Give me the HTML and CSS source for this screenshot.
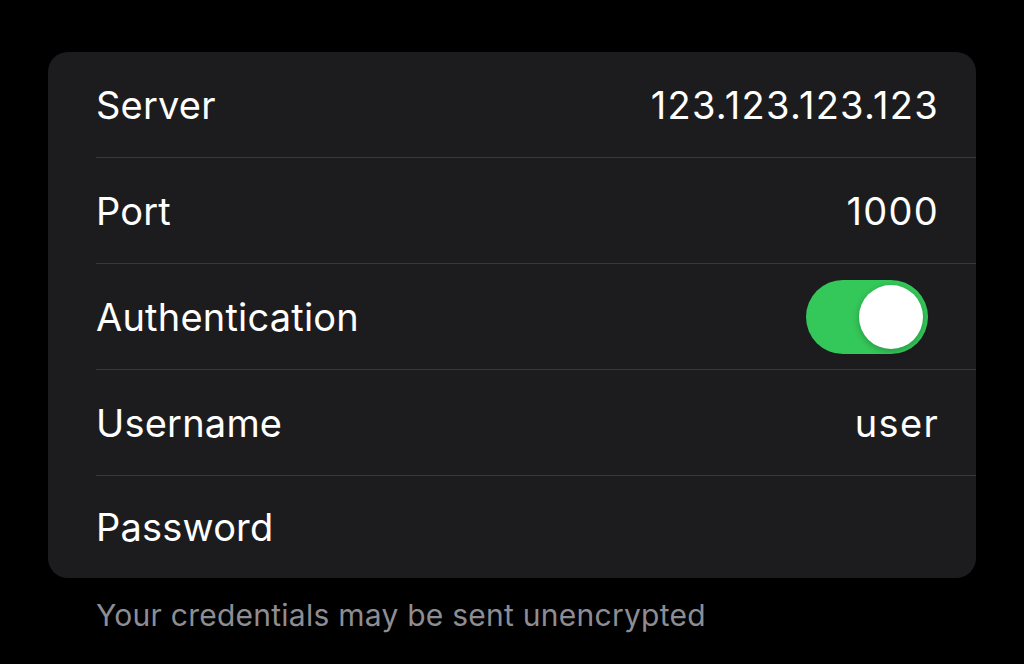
FILE: index.html
```html
<!DOCTYPE html>
<html>
<head>
    <title>Server settings</title>
    <link rel="stylesheet" href="styles.css">
</head>
<body>
    <div class="settings-group">
        <div class="settings-row">
            <span class="row-label">Server</span>
            <span class="row-value">123.123.123.123</span>
        </div>
        <div class="settings-row">
            <span class="row-label">Port</span>
            <span class="row-value">1000</span>
        </div>
        <div class="settings-row">
            <span class="row-label">Authentication</span>
            <span class="toggle on"><span class="toggle-knob"></span></span>
        </div>
        <div class="settings-row">
            <span class="row-label">Username</span>
            <span class="row-value">user</span>
        </div>
        <div class="settings-row last">
            <span class="row-label">Password</span>
        </div>
    </div>
    <div class="group-footer">Your credentials may be sent unencrypted</div>
</body>
</html>
```

FILE: styles.css
```css
body {
    margin: 0;
    background-color: #000000;
    font-family: Inter, "Noto Sans", sans-serif;
    color: #ffffff;
    padding: 52px 48px 0 48px;
}
.settings-group {
    background-color: #1c1c1e;
    border-radius: 20px;
    padding-left: 48px;
}
.settings-row {
    height: 105px;
    display: flex;
    align-items: center;
    justify-content: space-between;
    border-bottom: 1px solid #38383a;
    padding-right: 37px;
}
.settings-row.last {
    height: 102px;
    border-bottom: none;
}
.row-label {
    font-size: 38px;
    letter-spacing: 0.2px;
}
.row-value {
    font-size: 38px;
    letter-spacing: 1.3px;
}
.toggle {
    width: 122px;
    height: 74px;
    border-radius: 37px;
    background-color: #34c759;
    margin-right: 11px;
    display: flex;
    align-items: center;
    justify-content: flex-end;
    padding: 0 5px;
    box-sizing: border-box;
}
.toggle-knob {
    width: 64px;
    height: 64px;
    border-radius: 50%;
    background-color: #ffffff;
    box-shadow: 0 2px 6px rgba(0, 0, 0, 0.25);
}
.group-footer {
    padding: 19px 0 0 48px;
    font-size: 30px;
    letter-spacing: 0.25px;
    color: #8d8d93;
}
```
